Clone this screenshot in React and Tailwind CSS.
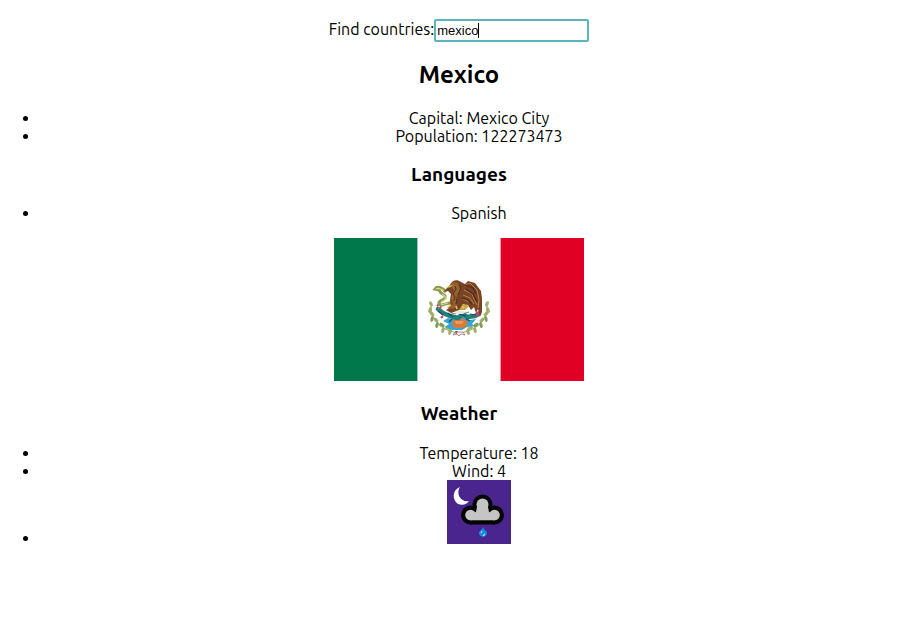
import { useState } from 'react';

const leaves = [
  [11, 32, -25], [10, 38, 20], [12, 42, -45], [12, 47, 10], [16, 48, -50], [17, 53, 15],
  [22, 53, -60], [23, 58, 15], [28, 56, -70], [30, 60, 20],
  [67, 32, 25], [68, 38, -20], [66, 42, 45], [66, 47, -10], [62, 48, 50], [61, 53, -15],
  [56, 53, 60], [55, 58, -15], [50, 56, 70], [48, 60, -20],
];

function Flag() {
  return (
    <svg role="img" aria-label="Flag of Mexico" viewBox="0 0 250 143" className="block h-[143px] w-[250px]">
      <path fill="#fff" d="M0 0h250v143H0z" />
      <path fill="#00784b" d="M0 0h83.4v143H0z" />
      <path fill="#df0024" d="M166.6 0H250v143h-83.4z" />
      <g transform="translate(86 34)">
        <path d="M11 34C11 49 22 59 39 61C56 59 67 49 67 34" fill="none" stroke="#99aa62" strokeWidth="1" />
        {leaves.map(([x, y, r]) => (
          <ellipse key={x + '-' + y} cx={x} cy={y} rx="1.6" ry="3" fill={y % 2 ? '#7f9d55' : '#a3ad69'} transform={`rotate(${r} ${x} ${y})`} />
        ))}
        <path d="M23 49l5-3 4 1 5-2h9l4 3 6-1-4 5 3 2-8 1-5 3H32l-7-3 4-3z" fill="#39a7cd" />
        <path d="M32 50l4-3h8l4 3-3 6H34z" fill="#d5793c" />
        <path d="M35 49h9l-2 3h-6z" fill="#e99a5c" />
        <path d="M35 60l-2 3 4-1 2 2 2-2 4 1-2-3z" fill="#eee" stroke="#af5967" strokeWidth=".7" />
        <path d="M35 59h3l-2 4z" fill="#48825a" />
        <path d="M18 37l5 4 7 3 8 2 5-4 4 3 8-1 4-2" fill="none" stroke="#247d78" strokeWidth="4.6" strokeLinecap="round" strokeLinejoin="round" />
        <path d="M18 39l5 4m5-2 5 4m6-3 7 2m4-2 6 1m-24 4-3 3m17-3 4 2" fill="none" stroke="#175463" strokeWidth="1.2" />
        <path d="M18 36l3 1m10 4 5 1m9-1 4-1" stroke="#57a489" strokeWidth="1.2" />
        <path d="M17 34l2-2m1 5 1-3m35 7 4-1m-4 4 3-2m-38 4 2-2" stroke="#d83b67" strokeWidth="2" />
        <path d="M27 35l4-1 4-3 5 2 5-1 4 2-4 4H30z" fill="#c3a73f" />
        <path d="M34 40l5-2 7 2-3 2h-6z" fill="#e5e7dc" />
        <path d="M26 20c-4-5-9-6-11-3l4 1 2 3c3 2 5 2 4 5-2 3-7 2-6 6 2 3 7-1 11-1 5 1 5-3 2-5" fill="none" stroke="#87994e" strokeWidth="3" />
        <path d="M25 20c-4-4-8-4-9-3m6 5c6 3 3 7-1 8m0 3 7-2" fill="none" stroke="#dad98c" strokeWidth="1.2" />
        <path d="M30 13c2-5 7-6 11-3l4 2 3-3 7 2 6 8 1 8v13l-2 4-2-7-2 4-2-6-3 3-3-5-5-1-4 6-8 3-5-3 5-3-1-7 1-6-3-3-5 1z" fill="#794326" />
        <path d="M30 12l5-2 4 2 1 6-4 8 1 9-5 2-4-1 5-4-2-6 3-8z" fill="#97602f" />
        <path d="M45 13l5-2 7 7 2 10-1 8m-14-18 8 4 2 5 3 6m-14-10 7 3 4 6m-11-5 6 3" fill="none" stroke="#b98245" strokeWidth="1" />
        <path d="M46 17l7 5 4 8m-15-4 6 2 4 4m-7-19 8 3 3 6" fill="none" stroke="#492a20" strokeWidth="1.2" />
        <path d="M35 14l1 3-3 5 2 3-1 4m5-17 2 4-3 7m-1 4-1 5" fill="none" stroke="#4f321c" strokeWidth="1" />
        <path d="M25 18l3-4 5-1-2 2-4 1z" fill="#dab650" />
        <path d="M28 35l3-2m5 1 1 3m5-3 2 2" stroke="#f0c35a" strokeWidth="1.5" />
      </g>
    </svg>
  );
}

function WeatherIcon() {
  return (
    <svg role="img" aria-label="Rain at night" viewBox="0 0 64 64" className="inline-block h-16 w-16 align-baseline">
      <path fill="#4a258e" d="M0 0h64v64H0z" />
      <path fill="#fff" d="M13 7C5 10 5 20 11 24c5 2 9 0 11-3-4 1-8-1-10-5-1-3-1-6 1-9z" />
      <g fill="#050505">
        <circle cx="35.500" cy="24.500" r="10" />
        <circle cx="23.500" cy="35" r="9.500" />
        <circle cx="47.500" cy="35" r="9.500" />
        <path d="M23 28h25v16.500H23z" />
      </g>
      <g fill="#c5c5c5">
        <circle cx="35.500" cy="24.500" r="6" />
        <circle cx="23.500" cy="35" r="5.300" />
        <circle cx="47.500" cy="35" r="5.300" />
        <path d="M23 34l6-2 1-5h11l1 5 6 2v6.300H23z" />
      </g>
      <path d="M36 47c-1 3-4 4-4 6 0 5 8 5 8 0 0-2-3-3-4-6z" fill="#1688e8" />
      <path d="M34 53l1-2m1 5 2-2" stroke="#a4ddff" strokeWidth="1.2" />
    </svg>
  );
}

function Facts({ children }) {
  return <ul className="list-disc pl-10 leading-[18px]">{children}</ul>;
}

export default function App() {
  const [query, setQuery] = useState('mexico');
  return (
    <div className="overflow-x-hidden bg-white">
      <main className="-mr-[3px] pt-[19px] text-center font-[Ubuntu,'Noto_Sans',sans-serif] text-base text-black">
        <div className="flex items-start justify-center leading-5">
          <label htmlFor="country">Find countries:</label>
          <div className="relative">
            <input
              id="country"
              type="text"
              value={query}
              onChange={(e) => setQuery(e.target.value)}
              className="block h-[23px] w-[155px] rounded-[2px] border-2 border-[#58b6bc] bg-white px-px font-['Liberation_Sans',Arial,sans-serif] text-[13px] caret-transparent outline-none"
            />
            <span aria-hidden="true" className="absolute top-1 left-11 h-[15px] w-px bg-black" />
          </div>
        </div>
        <h2 className="mt-[19px] mb-[21px] text-2xl leading-[27px] font-bold">Mexico</h2>
        <Facts>
          <li>Capital: Mexico City</li>
          <li>Population: 122273473</li>
        </Facts>
        <h3 className="my-5 text-[19px] leading-[19px] font-bold">Languages</h3>
        <Facts>
          <li>Spanish</li>
        </Facts>
        <div className="mt-4 flex justify-center">
          <Flag />
        </div>
        <h3 className="mt-[22px] mb-[21px] text-[19px] leading-5 font-bold">Weather</h3>
        <Facts>
          <li>Temperature: 18</li>
          <li>Wind: 4</li>
          <li><WeatherIcon /></li>
        </Facts>
      </main>
    </div>
  );
}
